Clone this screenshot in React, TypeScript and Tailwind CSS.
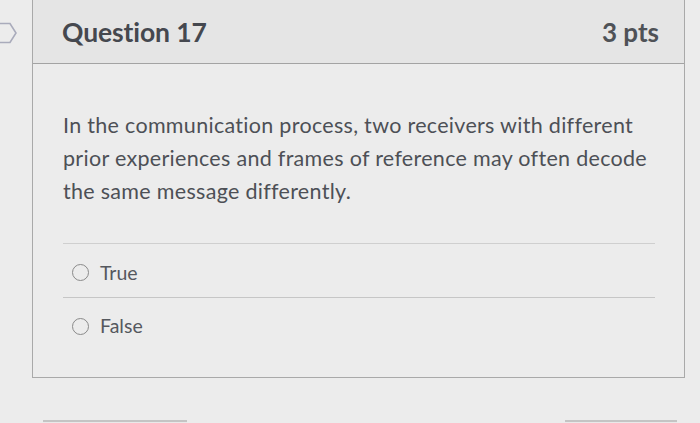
import React from "react";

export default function App() {
  return (
    <div
      className="relative w-[700px] h-[423px] overflow-hidden bg-[#ececec] text-[#4a4d53]"
      style={{ fontFamily: "Lato, 'Open Sans', sans-serif" }}
    >
      <svg className="absolute left-0 top-[22px]" width="18" height="22" viewBox="0 0 18 22">
        <path d="M-2 1.5 H10 L16 11 L10 20.5 H-2" fill="none" stroke="#a9abbb" strokeWidth="1.6" />
      </svg>
      <div className="ml-[32px] w-[653px] h-[378px] border-x border-b border-[#a9a9a9] flex flex-col">
        <div className="h-[64px] bg-[#e5e5e5] border-b border-[#a3a3a3] flex items-center justify-between pl-[29px] pr-[25px] pt-[2px]">
          <div className="text-[26.5px] font-bold text-[#45484f] tracking-[-0.1px]">Question 17</div>
          <div className="text-[26px] font-bold text-[#4f5257]">3 pts</div>
        </div>
        <div className="pl-[30px] pr-[28px] pt-[45px]">
          <p className="w-[596px] text-[21.5px] leading-[33px] text-[#4d5056] tracking-[0.3px]">
            In the communication process, two receivers with different prior experiences and frames of reference may often decode the same message differently.
          </p>
          <div className="mt-[35px] border-t border-[#cfcfcf] w-[592px]">
            <div className="h-[54px] flex items-center pl-[9px] gap-[11px] pt-[4px] border-b border-[#c6c6c6]">
              <span className="w-[17px] h-[17px] rounded-full border-[1.5px] border-[#8a8a8a]" />
              <span className="text-[19.5px] text-[#55585e]">True</span>
            </div>
            <div className="h-[54px] flex items-center pl-[9px] gap-[11px] pt-[2px]">
              <span className="w-[17px] h-[17px] rounded-full border-[1.5px] border-[#8a8a8a]" />
              <span className="text-[19.5px] text-[#55585e]">False</span>
            </div>
          </div>
        </div>
      </div>
      <div className="flex justify-between pl-[43px] pr-[23px] mt-[42px]">
        <div className="w-[144px] h-[10px] border-t-2 border-[#c4c4c4] bg-[#e9e9e9]" />
        <div className="w-[112px] h-[10px] border-t-2 border-[#c4c4c4] bg-[#e9e9e9]" />
      </div>
    </div>
  );
}
